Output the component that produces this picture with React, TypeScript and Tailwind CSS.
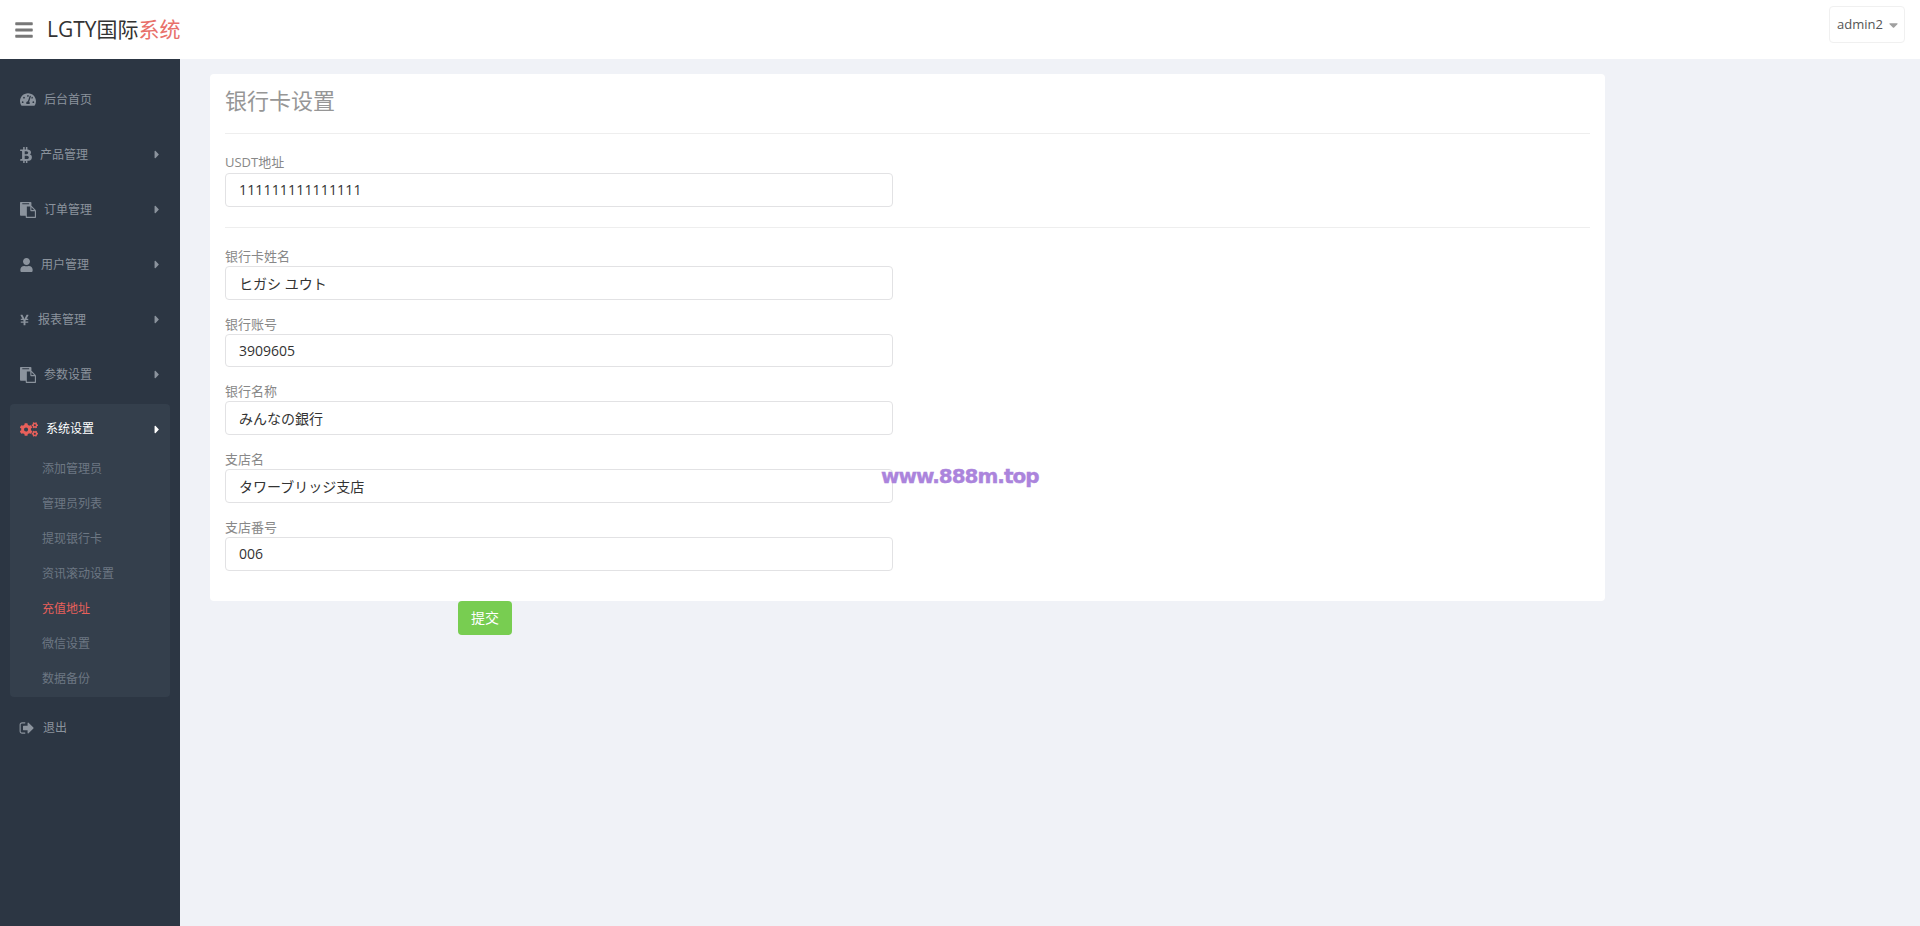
import React from "react";
import { FaBars, FaBtc, FaCaretDown, FaCaretRight, FaCogs, FaTachometerAlt, FaUser, FaYenSign } from "react-icons/fa";

const PastePath = "M768 1664h896v-640h-416q-40 0-68-28t-28-68v-416h-384v1152zm256-1440v-64q0-13-9.5-22.5t-22.5-9.5h-704q-13 0-22.5 9.5t-9.5 22.5v64q0 13 9.5 22.5t22.5 9.5h704q13 0 22.5-9.5t9.5-22.5zm256 672h299l-299-299v299zm512 128v672q0 40-28 68t-68 28h-960q-40 0-68-28t-28-68v-160h-544q-40 0-68-28t-28-68v-1344q0-40 28-68t68-28h1088q40 0 68 28t28 68v328q21 13 36 28l408 408q28 28 48 76t20 88z";
const SignOutPath = "M704 1440q0 4 1 20t.5 26.5-3 23.5-10 19.5-20.5 6.5h-320q-119 0-203.5-84.5t-84.5-203.5v-704q0-119 84.5-203.5t203.5-84.5h320q13 0 22.5 9.5t9.5 22.5q0 4 1 20t.5 26.5-3 23.5-10 19.5-20.5 6.5h-320q-66 0-113 47t-47 113v704q0 66 47 113t113 47h312l11.5 1 11.5 3 8 5.5 7 9 2 13.5zm928-544q0 26-19 45l-544 544q-19 19-45 19t-45-19-19-45v-288h-448q-26 0-45-19t-19-45v-384q0-26 19-45t45-19h448v-288q0-26 19-45t45-19 45 19l544 544q19 19 19 45z";

function Paste() {
  return (
    <svg viewBox="0 0 1792 1792" className="w-[16px] h-[16px]" fill="currentColor">
      <path d={PastePath} />
    </svg>
  );
}
function SignOut() {
  return (
    <svg viewBox="0 0 1792 1792" className="w-[16px] h-[16px] -ml-[1px]" fill="currentColor">
      <path d={SignOutPath} />
    </svg>
  );
}

function NavItem({ icon, label, gap, caret = true }: { icon: React.ReactNode; label: string; gap: string; caret?: boolean }) {
  return (
    <div className="h-[55px] flex items-center pl-[20px] pr-[20px] text-[#8b939d] text-[12px]">
      <span className="flex items-center">{icon}</span>
      <span className={gap}>{label}</span>
      {caret && <FaCaretRight className="ml-auto w-[6px] h-[13px]" />}
    </div>
  );
}

function Field({ label, value, jp, extra, labelClass }: { label: string; value: string; jp?: boolean; extra?: string; labelClass?: string }) {
  return (
    <div>
      <div className={(labelClass ?? "h-[19px]") + " leading-[18px] text-[13px] text-[#888888]"}>{label}</div>
      <input
        readOnly
        value={value}
        className={
          "block w-[668px] h-[33.75px] px-[13px] border border-[#e2e2e4] rounded-[4px] bg-white text-[14px] text-[#333333] outline-none " +
          (jp ? "font-['Open_Sans','Noto_Sans_CJK_JP',sans-serif] " : "") +
          (extra ?? "")
        }
      />
    </div>
  );
}

const subs = ["添加管理员", "管理员列表", "提现银行卡", "资讯滚动设置", "充值地址", "微信设置", "数据备份"];

export default function App() {
  return (
    <div className="relative h-[926px] overflow-hidden bg-[#f0f2f7] font-['Open_Sans','Noto_Sans_CJK_SC',sans-serif] flex flex-col">
      <header className="h-[59px] bg-white flex items-center shrink-0">
        <FaBars className="ml-[15px] w-[18px] h-[20px] text-[#777777]" />
        <div className="ml-[14px] text-[21px] text-[#333333] leading-none">
          LGTY国际<span className="text-[#e8706a]">系统</span>
        </div>
        <div className="ml-auto mr-[15px] mb-[10px] h-[37px] w-[76px] pl-[7px] border border-[#f0f0f0] rounded-[4px] flex items-center gap-[6px] text-[13px] text-[#555555]">
          admin2
          <FaCaretDown className="w-[9px] h-[14px] text-[#a0a0a0]" />
        </div>
      </header>

      <div className="flex flex-1">
        <aside className="w-[180px] shrink-0 bg-[#2c3643] pt-[13px]">
          <NavItem icon={<FaTachometerAlt className="w-[16px] h-[15px]" />} label="后台首页" gap="ml-[8px]" caret={false} />
          <NavItem icon={<FaBtc className="w-[12px] h-[16px]" />} label="产品管理" gap="ml-[8px]" />
          <NavItem icon={<Paste />} label="订单管理" gap="ml-[8px]" />
          <NavItem icon={<FaUser className="w-[13px] h-[14px]" />} label="用户管理" gap="ml-[8px]" />
          <NavItem icon={<FaYenSign className="w-[9px] h-[12px]" />} label="报表管理" gap="ml-[9px]" />
          <NavItem icon={<Paste />} label="参数设置" gap="ml-[8px]" />

          <div className="mx-[10px] mt-[2px] mb-[3px] rounded-[4px] bg-[#343f4c]">
            <div className="h-[48px] pt-[2px] flex items-center pl-[10px] pr-[10px] text-[12px] text-white">
              <FaCogs className="w-[18px] h-[15px] text-[#e8605b]" />
              <span className="ml-[8px]">系统设置</span>
              <FaCaretRight className="ml-auto w-[6px] h-[13px]" />
            </div>
            {subs.map((s) => (
              <div
                key={s}
                className={
                  "h-[35px] leading-[34px] pl-[32px] text-[12px] " +
                  (s === "充值地址" ? "text-[#e8605b]" : "text-[#6d7783]")
                }
              >
                {s}
              </div>
            ))}
          </div>

          <NavItem icon={<SignOut />} label="退出" gap="ml-[8px]" caret={false} />
        </aside>

        <main className="flex-1 pl-[30px] pt-[15px]">
          <form>
            <div className="w-[1395px] bg-white rounded-[4px] px-[15px] pt-[12px] pb-[30px]">
              <div className="h-[28px] leading-[28px] text-[22px] text-[#969696]">银行卡设置</div>
              <div className="mt-[19px] h-px bg-[#eeeeee]" />
              <div className="mt-[19px]">
                <Field label="USDT地址" value="111111111111111" extra="tracking-[0.17px]" labelClass="h-[20px]" />
              </div>
              <div className="mt-[20px] h-px bg-[#eeeeee]" />
              <div className="mt-[19px] flex flex-col gap-[15px]">
                <Field label="银行卡姓名" value="ヒガシ ユウト" jp />
                <Field label="银行账号" value="3909605" />
                <Field label="银行名称" value="みんなの銀行" jp />
                <Field label="支店名" value="タワーブリッジ支店" jp />
                <Field label="支店番号" value="006" />
              </div>
            </div>
            <button
              type="button"
              className="block ml-[248px] w-[54px] h-[34px] rounded-[4px] bg-[#78cd51] text-white text-[14px]"
            >
              提交
            </button>
          </form>
        </main>
      </div>

      <div className="absolute left-[881px] top-[464px] text-[20px] leading-[24px] font-bold text-[#ab84dc] font-['DejaVu_Sans',sans-serif] tracking-[-1px] [-webkit-text-stroke:0.4px_#ab84dc]">
        www.888m.top
      </div>
    </div>
  );
}
